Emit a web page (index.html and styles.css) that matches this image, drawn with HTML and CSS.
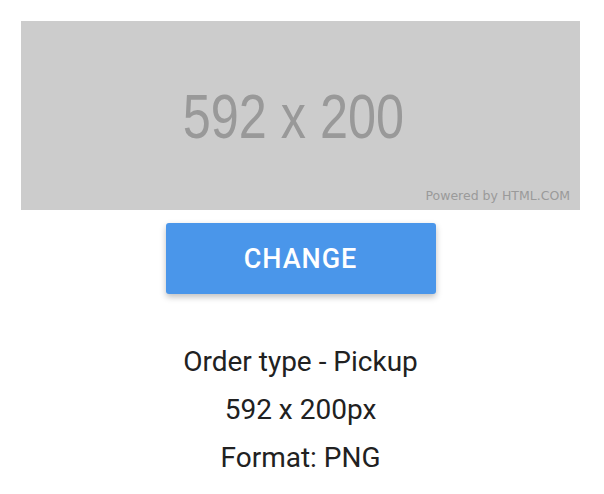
FILE: index.html
```html
<!DOCTYPE html>
<html lang="en">
<head>
  <meta charset="UTF-8">
  <meta name="viewport" content="width=device-width, initial-scale=1.0">
  <title>Order Image</title>
  <link rel="stylesheet" href="styles.css">
</head>
<body>
  <div class="placeholder">
    <span class="size">592 x 200</span>
    <span class="powered">Powered by HTML.COM</span>
  </div>

  <div class="actions">
    <button class="change-btn">CHANGE</button>
  </div>

  <section class="details">
    <p>Order type - Pickup</p>
    <p>592 x 200px</p>
    <p>Format: PNG</p>
  </section>
</body>
</html>
```

FILE: styles.css
```css
body {
  margin: 0;
  padding: 21px 24px 0 21px;
  background: #fff;
  font-family: Roboto, 'Noto Sans', sans-serif;
}
.placeholder {
  position: relative;
  height: 189px;
  background: #cccccc;
  display: flex;
  align-items: center;
  justify-content: center;
}
.size {
  font-family: 'Liberation Sans', Arial, sans-serif;
  font-size: 63px;
  color: #999;
  display: inline-block;
  transform: scaleX(0.8);
  margin-right: 14px;
}
.powered {
  position: absolute;
  right: 10px;
  bottom: 7px;
  font-family: 'DejaVu Sans', sans-serif;
  font-size: 12.5px;
  color: #9a9a9a;
}
.actions {
  display: flex;
  justify-content: center;
  margin-top: 13px;
}
.change-btn {
  width: 270px;
  height: 71px;
  background: #4a96ea;
  color: #fff;
  border: none;
  border-radius: 3px;
  font-family: Roboto, sans-serif;
  font-weight: 500;
  font-size: 27px;
  letter-spacing: 1px;
  box-shadow: 0 3px 6px rgba(0, 0, 0, 0.25);
  cursor: pointer;
}
.details {
  margin-top: 44px;
  text-align: center;
  color: #212121;
  font-size: 28px;
}
.details p {
  margin: 0;
  line-height: 48px;
}
```
